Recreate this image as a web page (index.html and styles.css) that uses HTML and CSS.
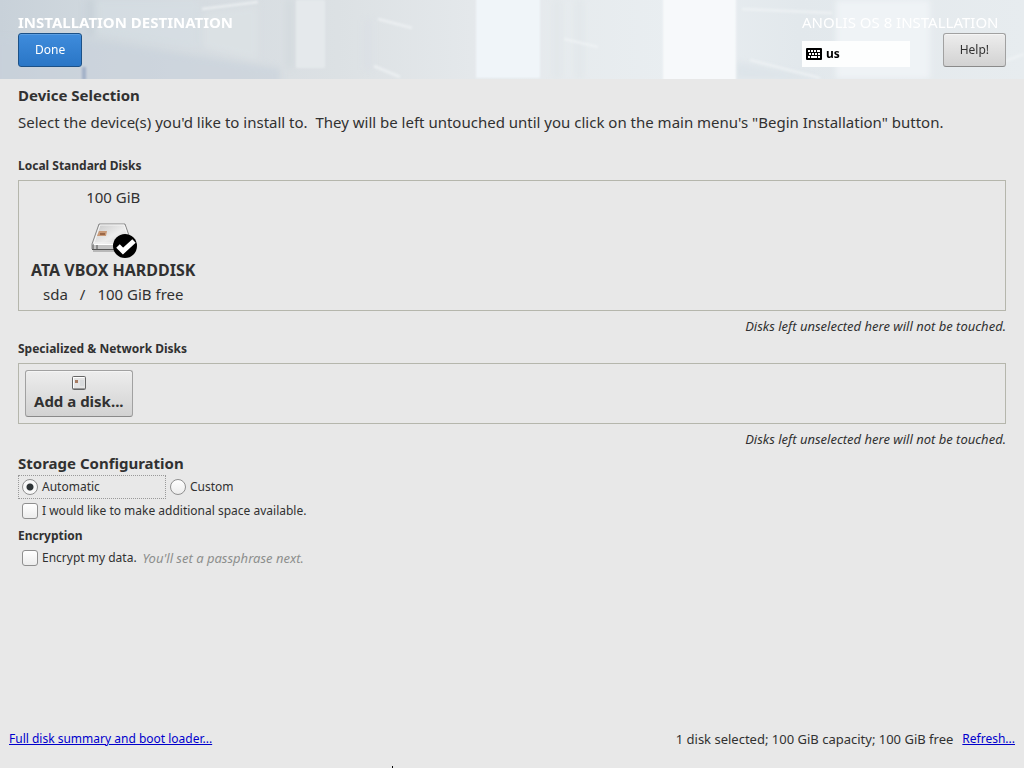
FILE: index.html
```html
<!DOCTYPE html>
<html lang="en">
  <head>
    <meta charset="UTF-8" />
    <meta name="viewport" content="width=device-width, initial-scale=1.0" />
    <title>Installation Destination</title>
    <link rel="stylesheet" href="styles.css">
  </head>
  <body>
    <header class="topbar">
      <svg class="topbar_art" viewBox="0 0 1024 79" preserveAspectRatio="none" aria-hidden="true">
        <defs>
          <linearGradient id="sky" x1="0" x2="1" y1="0" y2="0">
            <stop offset="0" stop-color="#c8d1d9" />
            <stop offset="0.09" stop-color="#d0d8de" />
            <stop offset="0.2" stop-color="#d6dce1" />
            <stop offset="0.33" stop-color="#dce1e4" />
            <stop offset="0.46" stop-color="#e4e8eb" />
            <stop offset="0.66" stop-color="#e9eef1" />
            <stop offset="0.78" stop-color="#e2e8ec" />
            <stop offset="1" stop-color="#e7ecef" />
          </linearGradient>
          <filter id="soft"><feGaussianBlur stdDeviation="3" /></filter>
          <filter id="edge"><feGaussianBlur stdDeviation="1" /></filter>
        </defs>
        <rect width="1024" height="79" fill="url(#sky)" />
        <g filter="url(#soft)">
          <path d="M-5 38L90 40L195 56L280 68V90H-5z" fill="#c8d1da" opacity="0.6" />
          <path d="M96 0H200V50L96 34z" fill="#d8dfe5" opacity="0.5" />
          <path d="M86 0h8v36h-8z" fill="#c1cbd4" opacity="0.5" />
          <path d="M203 12L258 6V60L203 48z" fill="#dde2e6" opacity="0.7" />
          <path d="M286 0h7v68h-7z" fill="#d3dade" />
          <path d="M365 20h6v50h-6z" fill="#d9dee6" opacity="0.6" />
          <path d="M553 0h8v79h-8zM576 0h7v79h-7z" fill="#dfe5e8" opacity="0.7" />
          <path d="M836 0h94v79h-94z" fill="#eff3f6" />
          <path d="M736 62L820 79H736z" fill="#dde4e9" />
        </g>
        <g filter="url(#edge)">
          <path d="M296 0h29v68h-29z" fill="#e5e9ec" />
          <path d="M476 -3h64v81h-64z" fill="#f0f5f9" />
          <path d="M663 -3h73v85h-73z" fill="#f7f9fb" />
          <path d="M82 67h4v13h-4z" fill="#a3b0c8" />
          <path d="M202 9l56 -7M378 19l34 9M374 66l26 11M564 39l34 8M742 9l90 4M750 60l70 18M1024 54l-24 9" stroke="#f2f5f7" stroke-width="3" fill="none" opacity="0.6" />
        </g>
      </svg>
      <div class="topbar_side">
        <h1 class="topbar_title">INSTALLATION DESTINATION</h1>
        <button type="button" class="btn btn-primary">Done</button>
      </div>
      <div class="topbar_side">
        <div class="topbar_product">ANOLIS OS 8 INSTALLATION</div>
        <div class="topbar_tools">
          <button type="button" class="keyboard">
            <svg width="16" height="12" viewBox="0 0 16 12" aria-hidden="true">
              <rect width="16" height="12" rx="1" fill="#000" />
              <path d="M2 3h2M5 3h2M8 3h2M11 3h3M3 6h2M6 6h2M9 6h2M12 6h2M2 9h2M5 9h6M12 9h2" stroke="#fff" stroke-width="2" />
            </svg>
            us
          </button>
          <button type="button" class="btn">Help!</button>
        </div>
      </div>
    </header>

    <main class="content">
      <h2 class="heading">Device Selection</h2>
      <p class="intro">Select the device(s) you'd like to install to.&nbsp; They will be left untouched until you click on the main menu's "Begin Installation" button.</p>

      <h3 class="subheading subheading-first">Local Standard Disks</h3>
      <div class="disk_box">
        <button type="button" class="disk" aria-pressed="true">
          <span>100 GiB</span>
          <svg width="48" height="49" viewBox="0 -2 48 49" aria-hidden="true">
            <defs>
              <linearGradient id="diskTop" x1="0" x2="1" y1="0" y2="1">
                <stop offset="0" stop-color="#c4c4c4" />
                <stop offset="0.5" stop-color="#ededed" />
                <stop offset="1" stop-color="#bcbcbc" />
              </linearGradient>
            </defs>
            <path d="M4 40h32" stroke="#b8b8b8" stroke-width="2" />
            <path d="M10 13h26l7 20v5H3v-5z" fill="url(#diskTop)" stroke="#888" />
            <path d="M11 14h24l6 18H5z" fill="none" stroke="#f5f5f5" />
            <path d="M3 33h40v5H3z" fill="#c4c4c4" />
            <path d="M3 33.500h40" stroke="#fff" />
            <path d="M3 38.500h40" stroke="#555" />
            <path d="M4 33v5M8 34v4" stroke="#555" />
            <path d="M10 20h8l-1 5H8z" fill="#c99a78" />
            <path d="M11 23h5" stroke="#9b6848" stroke-width="2" />
            <circle cx="36" cy="35" r="12" fill="#000" />
            <path d="M29 35l5 5L45 30" fill="none" stroke="#fff" stroke-width="5" />
          </svg>
          <strong class="disk_name">ATA VBOX HARDDISK</strong>
          <span class="disk_meta"><span>sda</span><span>/</span><span>100 GiB free</span></span>
        </button>
      </div>
      <p class="note">Disks left unselected here will not be touched.</p>

      <h3 class="subheading">Specialized &amp; Network Disks</h3>
      <div class="disk_box disk_box-network">
        <button type="button" class="btn btn-add">
          <svg width="16" height="16" viewBox="0 0 16 16" aria-hidden="true">
            <rect x="1.500" y="1.500" width="13" height="13" rx="1" fill="#e4e4e4" stroke="#666" />
            <path d="M2.500 13V2.500H13" fill="none" stroke="#fff" />
            <path d="M2 13.500h12" stroke="#999" />
            <rect x="4" y="5" width="3" height="3" fill="#a77c63" />
            <rect x="9" y="5" width="4" height="6" fill="#d9dbdd" />
          </svg>
          Add a disk...
        </button>
      </div>
      <p class="note">Disks left unselected here will not be touched.</p>

      <h2 class="heading heading-storage">Storage Configuration</h2>
      <div class="option_row">
        <label class="option option-focused"><input type="radio" name="partitioning" checked />Automatic</label>
        <label class="option"><input type="radio" name="partitioning" />Custom</label>
      </div>
      <div class="option_row">
        <label class="option"><input type="checkbox" />I would like to make additional space available.</label>
      </div>

      <h3 class="subheading">Encryption</h3>
      <div class="option_row">
        <label class="option"><input type="checkbox" />Encrypt my data. <em class="hint">You'll set a passphrase next.</em></label>
      </div>
    </main>

    <footer class="footer">
      <a href="#summary">Full disk summary and boot loader...</a>
      <div class="footer_status">
        <span class="footer_summary">1 disk selected; 100 GiB capacity; 100 GiB free</span>
        <a href="#refresh">Refresh...</a>
      </div>
    </footer>
    <span class="pointer"></span>
  </body>
</html>
```
FILE: styles.css
```css
* {
  box-sizing: border-box;
}

body {
  display: flex;
  flex-direction: column;
  min-height: 100vh;
  margin: 0;
  background-color: #e8e8e8;
  color: #313131;
  font-family: "Noto Sans", "Open Sans", sans-serif;
  font-size: 12px;
  line-height: 20px;
}

h1,
h2,
h3,
p {
  margin: 0;
}

button,
input {
  font: inherit;
  color: inherit;
}

a {
  color: #0000cc;
}

.topbar {
  position: relative;
  display: flex;
  justify-content: space-between;
  padding: 12px 18px;
}

.topbar_art {
  position: absolute;
  top: 0;
  left: 0;
  width: 100%;
  height: 100%;
}

.topbar_side {
  position: relative;
  color: #fff;
}

.topbar_title,
.topbar_product {
  font-size: 15px;
  line-height: 21px;
}

.topbar_tools {
  display: flex;
  justify-content: space-between;
  align-items: flex-end;
  min-width: 204px;
}

.btn {
  height: 34px;
  padding: 0 16px;
  border: 1px solid #a1a1a1;
  border-bottom-color: #8a8a8a;
  border-radius: 3px;
  background: linear-gradient(#ededed, #d2d2d2);
  box-shadow: inset 0 1px #f5f5f5;
  color: #313131;
}

.btn-primary {
  border-color: #1c5187;
  background: linear-gradient(#3f8cdc, #2a76c6);
  box-shadow: inset 0 1px #5b9ee2;
  color: #fff;
}

.keyboard {
  display: flex;
  align-items: center;
  gap: 4px;
  width: 108px;
  height: 26px;
  padding: 0 4px;
  border: 0;
  background-color: #fdfefe;
  color: #000;
  font-weight: bold;
}

.content {
  flex: 1;
  padding: 4px 18px;
}

.heading {
  font-size: 15px;
  line-height: 24px;
}

.heading-storage {
  margin-top: 2px;
}

.intro {
  margin-top: 3px;
  font-size: 15px;
  line-height: 24px;
}

.subheading {
  margin-top: 3px;
  font-size: 12px;
}

.subheading-first {
  margin-top: 22px;
}

.disk_box {
  display: flex;
  margin-top: 4px;
  padding: 4px 12px;
  border: 1px solid #b5b6ac;
}

.disk_box-network {
  padding: 6px;
}

.disk {
  display: flex;
  flex-direction: column;
  align-items: center;
  padding: 0;
  border: 0;
  background: none;
  font-size: 15px;
  line-height: 24px;
}

.disk_name {
  font-size: 16px;
}

.disk_meta {
  display: flex;
  gap: 12px;
}

.btn-add {
  display: flex;
  flex-direction: column;
  align-items: center;
  height: 47px;
  padding: 4px 8px;
  font-size: 15px;
  font-weight: bold;
}

.note {
  margin-top: 5px;
  font-size: 13px;
  font-style: italic;
  text-align: right;
}

.option_row {
  display: flex;
}

.option {
  display: flex;
  align-items: center;
  gap: 4px;
  height: 24px;
  padding: 0 4px;
}

.option-focused {
  width: 148px;
  outline: 1px dotted #999;
  outline-offset: -1px;
}

.option input {
  appearance: none;
  width: 16px;
  height: 16px;
  margin: 0;
  border: 1px solid #8f8f8f;
  border-radius: 3px;
  background: linear-gradient(#fff, #ececec);
}

.option input[type="radio"] {
  border-radius: 50%;
}

.option input[type="radio"]:checked {
  background: radial-gradient(circle, #2e3436 3px, #f8f8f8 4px);
}

.hint {
  margin-left: 2px;
  color: #8d8f8d;
  font-size: 13px;
}

.footer {
  display: flex;
  justify-content: space-between;
  padding: 0 9px 19px;
}

.footer_status {
  display: flex;
  gap: 9px;
}

.footer_summary {
  font-size: 13px;
}

/* tip of the mouse pointer at the screen edge */
.pointer {
  position: absolute;
  bottom: 0;
  left: 392px;
  width: 1px;
  height: 2px;
  background-color: #000;
}
```
